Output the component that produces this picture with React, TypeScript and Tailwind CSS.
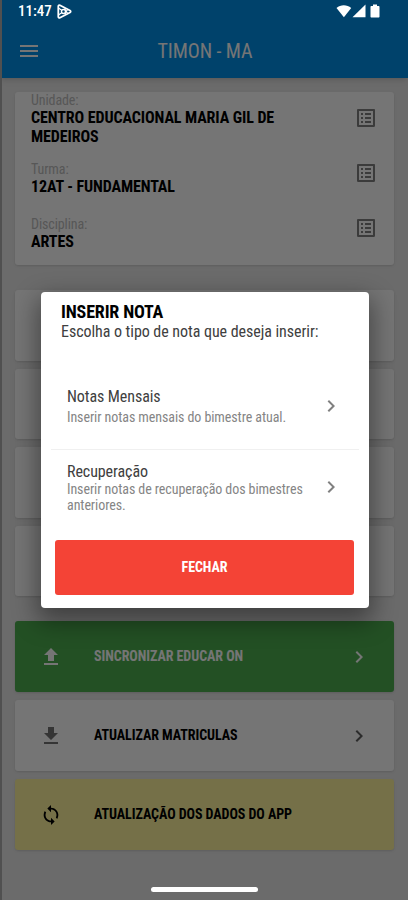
import type { ReactNode } from "react";
import { clsx } from "clsx";
import {
  MdChevronRight,
  MdFileDownload,
  MdFileUpload,
  MdListAlt,
  MdMenu,
  MdSync,
} from "react-icons/md";

const fields = [
  { label: "Unidade:", value: "CENTRO EDUCACIONAL MARIA GIL DE MEDEIROS", gap: "h-[69px]" },
  { label: "Turma:", value: "12AT - FUNDAMENTAL", gap: "h-[55px]" },
  { label: "Disciplina:", value: "ARTES", gap: "h-[50px]" },
];

// ── Status bar ────────────────────────────────────────────────────────
function StatusBar() {
  return (
    <div className="absolute inset-x-0 top-0 flex h-[22px] items-center pr-[28px] pl-[18px] text-white">
      <span className="w-[39px] text-[15px] leading-[22px] font-medium">11:47</span>
      <svg className="h-[15px] w-[15px]" viewBox="0 0 15 15" fill="none" stroke="currentColor">
        <path d="M1.3 2.2v10.6c0 1 .8 1.3 1.6.9L13 8.5c.9-.5.9-1.5 0-2L2.900 1.300c-.8-.4-1.600 0-1.600.9z" strokeWidth="1.8" />
        <circle cx="6.500" cy="7.500" r="2" strokeWidth="1.4" />
        <path d="M1.500 4 5 6.500M1.500 11 5 8.500M7.500 4.500l3 4.500M8 10.500l2.500-5" strokeWidth="1.1" />
      </svg>
      <svg className="ml-auto h-[14px] w-[44px]" viewBox="0 0 44 14" fill="currentColor">
        <path d="M.5 4C4.500.2 11 .2 15.200 4L7.900 13.200z" />
        <path d="M16.500 13.200 29.500.500v12.700z" />
        <path d="M35.500 2h1.500V.5h4V2h1.500c.6 0 1 .4 1 1v9.500c0 .6-.4 1-1 1h-7c-.6 0-1-.4-1-1V3c0-.6.4-1 1-1z" />
      </svg>
    </div>
  );
}

function Field({ label, value, gap }: { label: string; value: string; gap: string }) {
  return (
    <div className={gap}>
      <p className="text-[14px] leading-[15px] tracking-[-0.1px] text-[#bdbdbd]">{label}</p>
      <p className="text-[16px] leading-[19px] font-bold tracking-[-0.1px] text-black">{value}</p>
    </div>
  );
}

type ActionProps = {
  icon: ReactNode;
  label: string;
  className: string;
  chevron?: string;
};

function Action({ icon, label, className, chevron }: ActionProps) {
  return (
    <div className={clsx("flex h-[71px] items-center rounded-[3px] pr-[23px] pl-[24px] shadow", className)}>
      <span className="mr-[31px] flex w-6 justify-center">{icon}</span>
      <span className="text-[14px] font-bold tracking-[-0.06px]">{label}</span>
      {chevron && <MdChevronRight className={clsx("ml-auto size-6", chevron)} />}
    </div>
  );
}

function Option({ title, text, className }: { title: string; text: string; className: string }) {
  return (
    <div className={clsx("flex items-center justify-between pr-[26px] pl-[26px]", className)}>
      <div className="w-[245px]">
        {title}
        <p className="text-[14px] leading-[16px] tracking-[-0.08px] text-[#858585]">{text}</p>
      </div>
      <MdChevronRight className="size-6 text-[#808080]" />
    </div>
  );
}

// ── Dialog ────────────────────────────────────────────────────────────
function Dialog() {
  return (
    <div className="absolute inset-0 bg-black/54 pt-[292px] pl-[41px]">
      <div className="flex h-[316px] w-[328px] flex-col rounded-[4px] bg-white text-[16px] leading-[19px] tracking-[-0.08px] text-[#404040] shadow-[0_10px_24px_4px_rgba(0,0,0,0.4)]">
        <div className="h-[70px] pt-[10px] pl-[20px]">
          <h2 className="text-[18px] leading-[20px] font-bold tracking-[-0.15px] text-black">INSERIR NOTA</h2>
          <p className="tracking-[-0.05px]">Escolha o tipo de nota que deseja inserir:</p>
        </div>
        <Option
          title="Notas Mensais"
          text="Inserir notas mensais do bimestre atual."
          className="h-[87px] [&_p]:mt-[3px]"
        />
        <div className="mx-[10px] h-px bg-[#f0f0f0]" />
        <Option
          title="Recuperação"
          text="Inserir notas de recuperação dos bimestres anteriores."
          className="h-[74px]"
        />
        <button className="mr-[15px] ml-[14px] mt-[16px] h-[55px] rounded-[3px] bg-[#f44336] text-[14px] font-bold text-white">
          FECHAR
        </button>
      </div>
    </div>
  );
}

export default function App() {
  return (
    <div className="relative h-[900px] w-[408px] overflow-hidden bg-[#e9e9e9] font-['Roboto',sans-serif] [font-stretch:75%]">
      <header className="relative flex h-[78px] items-end bg-[#0091ea] pb-[15px] pl-[17px] text-white shadow-md">
        <MdMenu className="size-6" />
        <h1 className="w-[328px] text-center text-[20px] leading-[24px] tracking-[-0.1px]">TIMON - MA</h1>
      </header>

      <main className="pt-[14px] pr-[14px] pl-[15px]">
        <section className="flex h-[173px] justify-between overflow-hidden rounded-[3px] bg-white px-[16px] shadow">
          <div className="w-[270px] pt-px">
            {fields.map((f) => (
              <Field key={f.label} {...f} />
            ))}
          </div>
          <div className="flex flex-col gap-[31px] pt-[14px] text-[#808080]">
            {fields.map((f) => (
              <MdListAlt key={f.label} className="size-6" />
            ))}
          </div>
        </section>

        <div className="mt-[25px] flex flex-col gap-[8px]">
          {[0, 1, 2, 3].map((i) => (
            <div key={i} className="h-[70.5px] rounded-[3px] bg-white shadow" />
          ))}
        </div>

        <div className="mt-[25px] flex flex-col gap-[8px]">
          <Action
            icon={<MdFileUpload className="size-6" />}
            label="SINCRONIZAR EDUCAR ON"
            className="bg-[#4caf50] text-white"
            chevron="text-white"
          />
          <Action
            icon={<MdFileDownload className="size-6 text-[#757575]" />}
            label="ATUALIZAR MATRICULAS"
            className="bg-white text-black"
            chevron="text-[#616161]"
          />
          <Action
            icon={<MdSync className="size-[22px]" />}
            label="ATUALIZAÇÃO DOS DADOS DO APP"
            className="bg-[#fff59d] text-black"
          />
        </div>
      </main>

      <Dialog />
      <StatusBar />
      <div className="absolute inset-y-0 left-0 w-[2px] bg-[#505050]" />
      <div className="absolute bottom-[8px] left-[151px] h-[5px] w-[107px] rounded-full bg-white" />
    </div>
  );
}
